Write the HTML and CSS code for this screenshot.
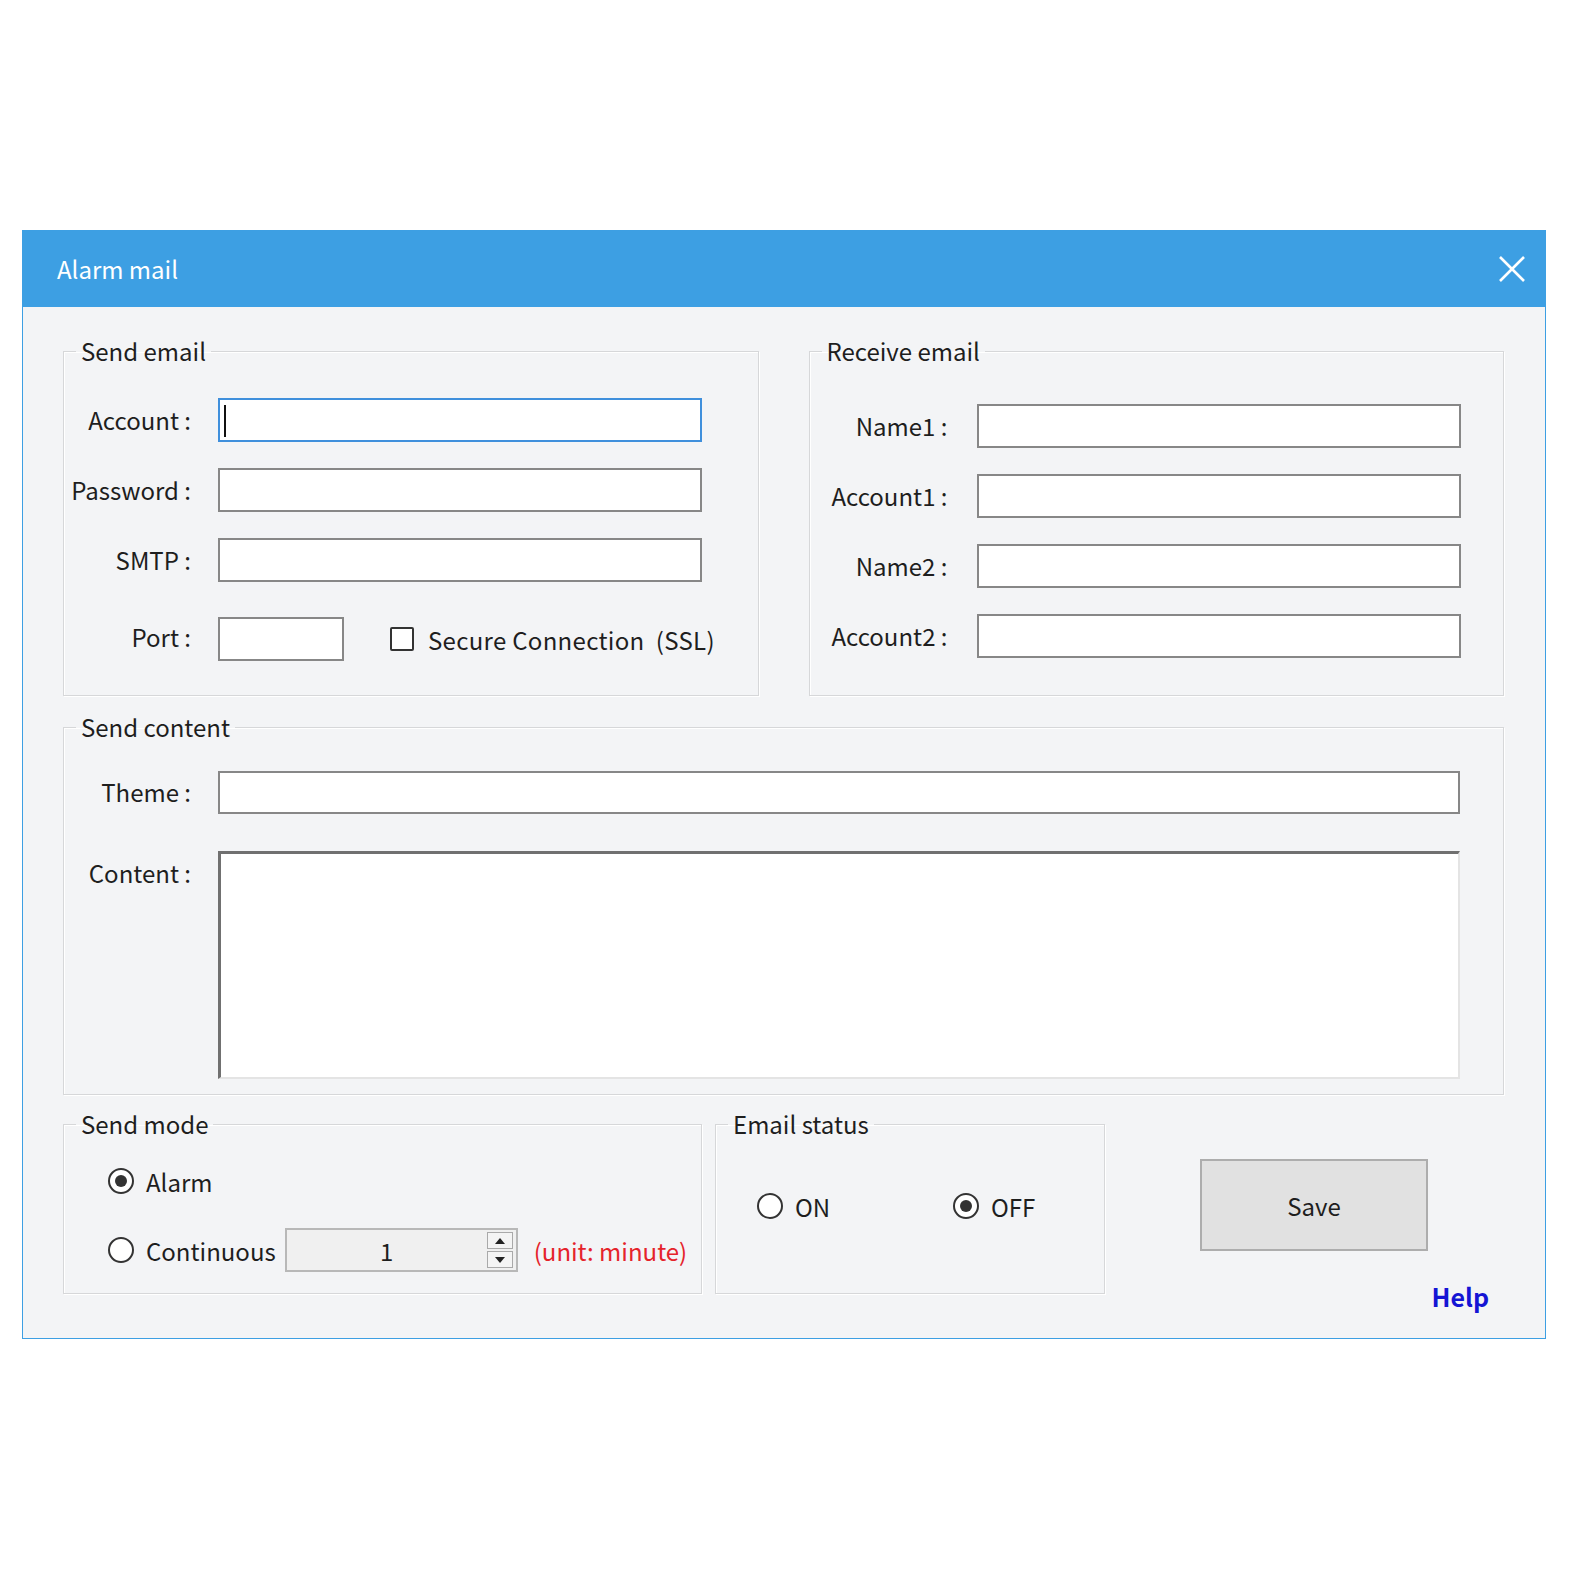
FILE: index.html
```html
<!DOCTYPE html>
<html lang="en">
<head>
  <meta charset="UTF-8">
  <title>Alarm mail</title>
  <link rel="stylesheet" href="styles.css">
</head>
<body>
  <div class="dialog">
    <div class="titlebar">
      <span class="title">Alarm mail</span>
      <svg class="close" width="28" height="28" viewBox="0 0 28 28">
        <path d="M2 2 L26 26 M26 2 L2 26" stroke="#fff" stroke-width="2.6" fill="none"/>
      </svg>
    </div>

    <div class="content">
      <!-- Top row: send / receive accounts -->
      <div class="row-top">
        <fieldset class="group send-email">
          <legend>Send email</legend>
          <div class="form">
            <label class="lbl">Account :</label>
            <span class="focus-wrap"><input type="text" class="field focused"><span class="caret"></span></span>

            <label class="lbl">Password :</label>
            <input type="password" class="field">

            <label class="lbl">SMTP :</label>
            <input type="text" class="field">

            <label class="lbl port-lbl">Port :</label>
            <div class="port-row">
              <input type="text" class="field port">
              <span class="check"></span>
              <span class="check-text">Secure Connection&nbsp; (SSL)</span>
            </div>
          </div>
        </fieldset>

        <fieldset class="group receive-email">
          <legend>Receive email</legend>
          <div class="form">
            <label class="lbl">Name1 :</label>
            <input type="text" class="field">

            <label class="lbl">Account1 :</label>
            <input type="text" class="field">

            <label class="lbl">Name2 :</label>
            <input type="text" class="field">

            <label class="lbl">Account2 :</label>
            <input type="text" class="field">
          </div>
        </fieldset>
      </div>

      <!-- Message -->
      <fieldset class="group send-content">
        <legend>Send content</legend>
        <div class="form">
          <label class="lbl">Theme :</label>
          <input type="text" class="field theme">

          <label class="lbl top">Content :</label>
          <textarea class="body-text"></textarea>
        </div>
      </fieldset>

      <!-- Bottom row -->
      <div class="row-bottom">
        <fieldset class="group send-mode">
          <legend>Send mode</legend>
          <div class="mode-list">
            <div class="opt">
              <span class="radio checked"></span>
              <span>Alarm</span>
            </div>
            <div class="opt">
              <span class="radio"></span>
              <span>Continuous</span>
              <div class="spinner">
                <span class="spin-value">1</span>
                <span class="spin-btns">
                  <span class="spin-btn up"></span>
                  <span class="spin-btn down"></span>
                </span>
              </div>
              <span class="unit">(unit: minute)</span>
            </div>
          </div>
        </fieldset>

        <fieldset class="group email-status">
          <legend>Email status</legend>
          <div class="status-row">
            <div class="opt status-opt">
              <span class="radio"></span>
              <span>ON</span>
            </div>
            <div class="opt">
              <span class="radio checked"></span>
              <span>OFF</span>
            </div>
          </div>
        </fieldset>

        <div class="actions">
          <button class="save">Save</button>
          <a class="help">Help</a>
        </div>
      </div>
    </div>
  </div>
</body>
</html>
```

FILE: styles.css
```css
body {
  margin: 0;
  background: #fff;
  font-family: "Noto Sans CJK SC", "Noto Sans", sans-serif;
  color: #1e1e1e;
}
.dialog {
  margin: 230px 0 0 22px;
  width: 1524px;
  border: 1px solid #3d9fe3;
  border-top: none;
  background: #f3f4f6;
  box-sizing: border-box;
}
.titlebar {
  height: 77px;
  background: #3d9fe3;
  display: flex;
  align-items: center;
  justify-content: space-between;
  padding: 0 19px 0 34px;
}
.title {
  color: #fff;
  font-size: 24px;
}
.content {
  padding: 30px 41px 25px 40px;
}

/* group boxes */
.group {
  margin: 0;
  padding: 0;
  min-width: 0;
  border: 1px solid #d6d7d9;
  box-shadow: inset 1px 1px 0 #fff, 1px 1px 0 #fff;
}
.group legend {
  margin-left: 12px;
  padding: 0 5px;
  font-size: 24px;
  line-height: 28px;
}
.form {
  display: grid;
  align-items: center;
}
.lbl {
  font-size: 24px;
  text-align: right;
  line-height: 44px;
}
.lbl.top {
  align-self: start;
}
.field {
  height: 44px;
  width: 484px;
  box-sizing: border-box;
  border: 2px solid #878787;
  background: #fff;
  margin: 0;
  font-size: 22px;
}
.focus-wrap {
  position: relative;
  display: block;
}
.field.focused {
  border-color: #3f8fdc;
  outline: none;
}
.caret {
  position: absolute;
  left: 6px;
  top: 7px;
  width: 2px;
  height: 32px;
  background: #111;
}

.row-top {
  display: flex;
  gap: 50px;
}
.row-top .group {
  flex: 1;
}
.send-email .form {
  grid-template-columns: 127px 484px;
  column-gap: 27px;
  row-gap: 26px;
  padding: 33px 0 34px 0;
}
.port-row {
  margin-top: 9px;
  display: flex;
  align-items: center;
}
.port-lbl {
  margin-top: 5px;
}
.field.port {
  width: 126px;
  flex-shrink: 0;
}
.check {
  flex-shrink: 0;
  width: 24px;
  height: 24px;
  box-sizing: border-box;
  border: 2px solid #333;
  background: #fff;
  border-radius: 2px;
  margin-left: 46px;
}
.check-text {
  margin-left: 14px;
  font-size: 24px;
  letter-spacing: 0.3px;
  white-space: nowrap;
}
.receive-email .form {
  grid-template-columns: 138px 484px;
  column-gap: 29px;
  row-gap: 26px;
  padding: 39px 0 30px 0;
}

.send-content {
  margin-top: 17px;
}
.send-content .form {
  grid-template-columns: 127px 1fr;
  column-gap: 27px;
  row-gap: 37px;
  padding: 29px 43px 15px 0;
}
.field.theme {
  width: 100%;
  height: 43px;
}
.body-text {
  height: 228px;
  margin: 0;
  box-sizing: border-box;
  resize: none;
  background: #fff;
  border-style: solid;
  border-width: 3px 2px 2px 3px;
  border-color: #707070 #e4e4e4 #e4e4e4 #707070;
}

/* bottom row */
.row-bottom {
  display: flex;
  align-items: flex-start;
  margin-top: 15px;
}
.send-mode {
  width: 639px;
  box-sizing: border-box;
}
.mode-list {
  padding: 21px 0 21px 44px;
  display: flex;
  flex-direction: column;
  gap: 25px;
}
.opt {
  display: flex;
  align-items: center;
  height: 44px;
  font-size: 24px;
}
.radio {
  width: 26px;
  height: 26px;
  box-sizing: border-box;
  border: 2px solid #333;
  border-radius: 50%;
  background: #fff;
  margin-right: 12px;
  display: flex;
  align-items: center;
  justify-content: center;
}
.radio.checked::after {
  content: "";
  width: 12px;
  height: 12px;
  border-radius: 50%;
  background: #333;
}
.spinner {
  display: flex;
  align-items: center;
  width: 233px;
  height: 44px;
  box-sizing: border-box;
  margin-left: 9px;
  border: 2px solid #b8b8b8;
  background: #f0f0f0;
}
.spin-value {
  flex: 1;
  text-align: center;
  font-size: 24px;
}
.spin-btns {
  display: flex;
  flex-direction: column;
  gap: 2px;
  margin-right: 3px;
}
.spin-btn {
  width: 26px;
  height: 17px;
  box-sizing: border-box;
  border: 1px solid #a9a9a9;
  background: #f4f4f4;
  display: flex;
  align-items: center;
  justify-content: center;
}
.spin-btn.up::after {
  content: "";
  border: 5px solid transparent;
  border-bottom: 6px solid #222;
  border-top: none;
}
.spin-btn.down::after {
  content: "";
  border: 5px solid transparent;
  border-top: 6px solid #222;
  border-bottom: none;
}
.unit {
  margin-left: 16px;
  color: #e5232b;
  font-size: 24px;
}
.email-status {
  width: 390px;
  box-sizing: border-box;
  margin-left: 13px;
}
.status-row {
  display: flex;
  padding: 46px 0 65px 41px;
}
.status-opt {
  width: 196px;
}
.actions {
  flex: 1;
  display: flex;
  flex-direction: column;
  padding-top: 49px;
}
.save {
  margin-left: 95px;
  width: 228px;
  height: 92px;
  background: #e1e1e1;
  border: 2px solid #adadad;
  font-family: inherit;
  font-size: 24px;
  color: #1e1e1e;
}
.help {
  align-self: flex-end;
  margin: 28px 15px 0 0;
  color: #1414d4;
  font-weight: bold;
  font-size: 25px;
  line-height: 34px;
  cursor: pointer;
}
```
